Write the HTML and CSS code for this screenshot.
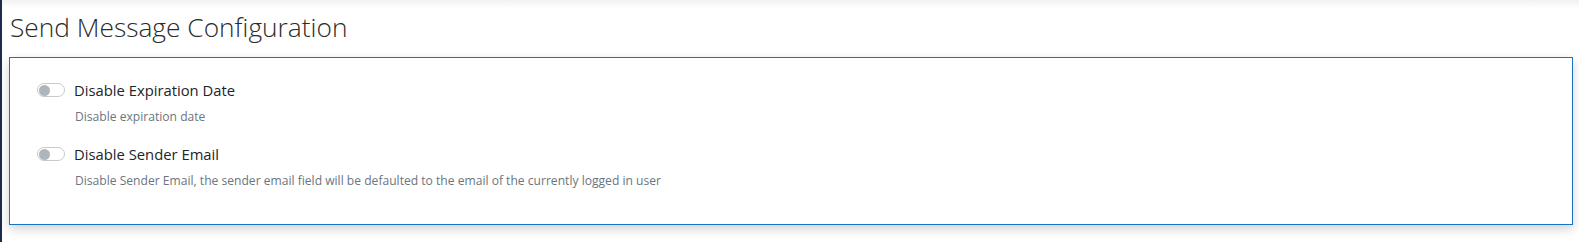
FILE: index.html
```html
<!DOCTYPE html>
<html lang="en">
<head>
<meta charset="utf-8">
<title>Send Message Configuration</title>
<link rel="stylesheet" href="styles.css">
</head>
<body>
<div class="page">
  <div class="content">
    <h1 class="title">Send Message Configuration</h1>
    <div class="card">
      <div class="setting">
        <div class="setting-head">
          <span class="toggle"><span class="knob"></span></span>
          <span class="label">Disable Expiration Date</span>
        </div>
        <div class="desc">Disable expiration date</div>
      </div>
      <div class="setting">
        <div class="setting-head">
          <span class="toggle"><span class="knob"></span></span>
          <span class="label">Disable Sender Email</span>
        </div>
        <div class="desc">Disable Sender Email, the sender email field will be defaulted to the email of the currently logged in user</div>
      </div>
    </div>
  </div>
</div>
</body>
</html>
```
FILE: styles.css
```css
html, body {
  margin: 0;
  padding: 0;
  background: #ffffff;
  font-family: "Open Sans", "Noto Sans", sans-serif;
}
.page {
  display: flex;
  height: 242px;
  border-left: 2px solid #1d2a52;
  box-sizing: border-box;
  background: linear-gradient(to bottom, #f1f1f1 0px, #ffffff 8px);
}
.content {
  flex: 1;
  padding: 8px 6px 0 7px;
}
.title {
  margin: 0 0 11px 1px;
  font-weight: 300;
  font-size: 26.3px;
  line-height: 38px;
  color: #2b2b2b;
}
.card {
  border: 1px solid #1a73c7;
  background: #fff;
  padding: 21px 27px 0;
  height: 168px;
  box-sizing: border-box;
  box-shadow: 0 4px 10px rgba(0,0,0,0.18);
}
.setting + .setting {
  margin-top: 18px;
}
.setting-head {
  display: flex;
  align-items: center;
  gap: 9px;
  height: 22px;
}
.toggle {
  width: 28px;
  height: 14px;
  box-sizing: border-box;
  border: 1px solid #c6cacf;
  border-radius: 8px;
  background: #fff;
  display: flex;
  align-items: center;
  padding: 0 1px;
}
.knob {
  width: 11px;
  height: 11px;
  border-radius: 50%;
  background: #adb5bd;
}
.label {
  font-size: 14.8px;
  color: #212529;
}
.desc {
  margin: 7px 0 0 38px;
  font-size: 12.1px;
  color: #6c757d;
}
```
